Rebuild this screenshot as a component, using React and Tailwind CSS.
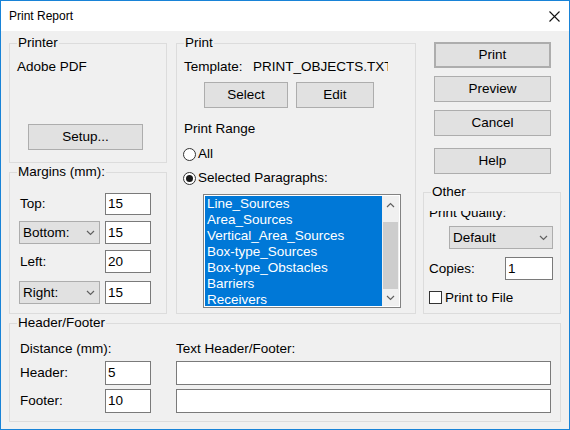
import React from 'react';

const Group = ({ label, className = '', children }) => (
  <div className={`relative border border-[#dcdcdc] ${className}`}>
    <span className="absolute -top-[9px] left-[7px] px-[1px] bg-[#f0f0f0] leading-[16px]">
      {label}
    </span>
    {children}
  </div>
);

const Button = ({ children, className = '' }) => (
  <div
    className={`flex items-center justify-center border border-[#adadad] bg-[#e1e1e1] ${className}`}
  >
    {children}
  </div>
);

const Chevron = ({ up = false, className = '' }) => (
  <svg width="9" height="6" viewBox="0 0 9 6" className={className}>
    <path
      d={up ? 'M1 5 L4.5 1.5 L8 5' : 'M1 1 L4.5 4.5 L8 1'}
      fill="none"
      stroke="#606060"
      strokeWidth="1.2"
    />
  </svg>
);

const Field = ({ value = '', className = '' }) => (
  <div
    className={`flex shrink-0 items-center border border-[#7a7a7a] bg-white pl-[2px] ${className}`}
  >
    {value}
  </div>
);

const Dropdown = ({ value, className = '' }) => (
  <div
    className={`flex shrink-0 items-center justify-between border border-[#adadad] bg-[#e1e1e1] pl-[3px] pr-[4px] ${className}`}
  >
    <span>{value}</span>
    <Chevron />
  </div>
);

const Radio = ({ checked, label }) => (
  <div className="flex h-[16px] items-center ml-[6px] gap-[2px]">
    <span className="flex h-[13px] w-[13px] items-center justify-center rounded-full border border-[#333] bg-white">
      {checked && <span className="h-[7px] w-[7px] rounded-full bg-[#1a1a1a]" />}
    </span>
    <span>{label}</span>
  </div>
);

const items = [
  'Line_Sources',
  'Area_Sources',
  'Vertical_Area_Sources',
  'Box-type_Sources',
  'Box-type_Obstacles',
  'Barriers',
  'Receivers',
];

export default function App() {
  return (
    <div className="flex h-[430px] w-[570px] flex-col border border-[#1883d7] bg-[#f0f0f0] font-['Liberation_Sans',Arial,sans-serif] text-[13.5px] leading-[16px] text-black">
      {/* Title bar */}
      <div className="flex h-[30px] shrink-0 items-center justify-between bg-white pl-[8px] pr-[9px]">
        <span className="text-[12px]">Print Report</span>
        <svg width="11" height="11" viewBox="0 0 11 11">
          <path d="M0.5 0.5 L10.5 10.5 M10.5 0.5 L0.5 10.5" stroke="#111" strokeWidth="1.1" />
        </svg>
      </div>

      <div className="flex-1 pl-[8px] pt-[12px]">
        <div className="flex h-[271px]">
          {/* Left column */}
          <div className="flex w-[158px] flex-col gap-[9px]">
            <Group label="Printer" className="h-[120px] pl-[7px] pt-[15px]">
              <div className="h-[16px]">Adobe PDF</div>
              <Button className="ml-[11px] mt-[49px] h-[26px] w-[115px]">Setup...</Button>
            </Group>

            <Group label="Margins (mm):" className="h-[142px] pl-[9px] pt-[20px]">
              <div className="flex h-[22px] items-center">
                <span className="w-[86px] pl-[1px]">Top:</span>
                <Field value="15" className="h-[22px] w-[46px]" />
              </div>
              <div className="mt-[6px] flex h-[23px] items-center gap-[5px]">
                <Dropdown value="Bottom:" className="h-[23px] w-[81px]" />
                <Field value="15" className="h-[23px] w-[46px]" />
              </div>
              <div className="mt-[6px] flex h-[23px] items-center">
                <span className="w-[86px] pl-[1px]">Left:</span>
                <Field value="20" className="h-[23px] w-[46px]" />
              </div>
              <div className="mt-[8px] flex h-[23px] items-center gap-[5px]">
                <Dropdown value="Right:" className="h-[23px] w-[81px]" />
                <Field value="15" className="h-[23px] w-[46px]" />
              </div>
            </Group>
          </div>

          {/* Print group */}
          <Group label="Print" className="ml-[9px] w-[240px] pl-[7px] pt-[15px]">
            <div className="flex h-[16px]">
              <span className="w-[69px]">Template:</span>
              <span className="w-[135px] overflow-hidden whitespace-nowrap">PRINT_OBJECTS.TXT</span>
            </div>
            <div className="ml-[20px] mt-[7px] flex gap-[8px]">
              <Button className="h-[26px] w-[84px]">Select</Button>
              <Button className="h-[26px] w-[78px]">Edit</Button>
            </div>
            <div className="mt-[13px] h-[16px]">Print Range</div>
            <div className="-ml-[7px] mt-[9px]">
              <Radio label="All" />
            </div>
            <div className="-ml-[7px] mt-[8px]">
              <Radio checked label="Selected Paragraphs:" />
            </div>
            <div className="ml-[19px] mt-[8px] flex h-[114px] w-[198px] border border-[#828282] bg-white p-[1px]">
              <div className="flex-1 overflow-hidden bg-[#0078d7] pl-[2px] text-white">
                {items.map((it) => (
                  <div key={it} className="h-[16px] whitespace-nowrap">
                    {it}
                  </div>
                ))}
              </div>
              <div className="flex w-[17px] flex-col bg-[#f0f0f0]">
                <div className="flex h-[17px] items-center justify-center">
                  <Chevron up />
                </div>
                <div className="h-[9px]" />
                <div className="mx-[1px] flex-1 bg-[#cdcdcd]" />
                <div className="flex h-[17px] items-center justify-center">
                  <Chevron />
                </div>
              </div>
            </div>
          </Group>

          {/* Right column */}
          <div className="-mt-[1px] ml-[7px] flex w-[138px] flex-col">
            <Button className="ml-[11px] h-[26px] w-[117px] border-2 border-[#0078d7]">Print</Button>
            <Button className="ml-[11px] mt-[8px] h-[26px] w-[117px]">Preview</Button>
            <Button className="ml-[11px] mt-[8px] h-[26px] w-[117px]">Cancel</Button>
            <Button className="ml-[11px] mt-[12px] h-[26px] w-[117px]">Help</Button>
            <Group label="Other" className="mt-[18px] h-[122px] pl-[5px]">
              <div className="mt-[18px] h-[10px] overflow-hidden">
                <div className="-mt-[6px] h-[16px]">Print Quality:</div>
              </div>
              <Dropdown value="Default" className="ml-[20px] mt-[5px] h-[23px] w-[104px]" />
              <div className="mt-[8px] flex h-[23px] items-center">
                <span className="w-[76px]">Copies:</span>
                <Field value="1" className="h-[23px] w-[48px]" />
              </div>
              <div className="mt-[11px] flex h-[13px] items-center gap-[3px]">
                <span className="h-[13px] w-[13px] border border-[#333] bg-white" />
                <span>Print to File</span>
              </div>
            </Group>
          </div>
        </div>

        {/* Header/Footer */}
        <Group label="Header/Footer" className="mt-[9px] h-[99px] w-[552px] pl-[10px] pt-[17px]">
          <div className="flex h-[16px]">
            <span className="w-[156px]">Distance (mm):</span>
            <span>Text Header/Footer:</span>
          </div>
          <div className="mt-[4px] flex h-[24px] items-center">
            <span className="w-[85px]">Header:</span>
            <Field value="5" className="h-[24px] w-[46px]" />
            <Field className="ml-[25px] h-[24px] w-[375px]" />
          </div>
          <div className="mt-[4px] flex h-[24px] items-center">
            <span className="w-[85px]">Footer:</span>
            <Field value="10" className="h-[24px] w-[46px]" />
            <Field className="ml-[25px] h-[24px] w-[375px]" />
          </div>
        </Group>
      </div>
    </div>
  );
}
